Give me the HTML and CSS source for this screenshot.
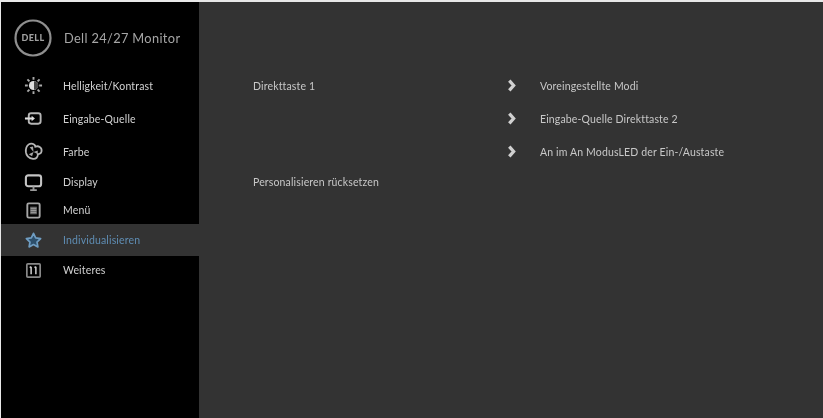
FILE: index.html
```html
<!DOCTYPE html>
<html lang="de">
<head>
<meta charset="utf-8">
<title>Dell 24/27 Monitor</title>
<link rel="stylesheet" href="styles.css">
</head>
<body>
<div class="osd">
  <aside class="sidebar">
    <header class="brand">
      <svg class="logo" viewBox="0 0 38 38"><circle cx="19" cy="19" r="17.500" fill="none" stroke="#8f8f8f" stroke-width="2.200"/></svg>
      <span class="logo-text">DELL</span>
      <span class="brand-name">Dell 24/27 Monitor</span>
    </header>
    <nav class="menu">
      <div class="item tall">
        <svg class="icon" viewBox="0 0 20 20"><circle cx="10" cy="10" r="4.800" fill="#ddd"/><path d="M10.500 5.400a4.600 4.600 0 0 1 0 9.200z" fill="#444"/><path d="M10 1v3M10 16v3M1 10h3M16 10h3M3.600 3.600l2.100 2.100M14.300 14.300l2.100 2.100M3.600 16.400l2.100-2.100M14.300 5.700l2.100-2.100" stroke="#aaa" stroke-width="2" fill="none"/></svg>
        <span>Helligkeit/Kontrast</span>
      </div>
      <div class="item tall">
        <svg class="icon" viewBox="0 0 20 20"><rect x="5" y="4.500" width="12.500" height="11" rx="2.500" fill="none" stroke="#b5b5b5" stroke-width="2"/><path d="M1 10h8" stroke="#ddd" stroke-width="2.200"/><path d="M8 7l3.500 3-3.500 3z" fill="#ddd"/></svg>
        <span>Eingabe-Quelle</span>
      </div>
      <div class="item tall">
        <svg class="icon" viewBox="0 0 20 20"><path d="M5 2.500C7.500 .8 11.500 1.800 12 5c3-1.500 7 .5 6.500 4.500-.4 2.700-2.500 3.500-4 3.200.5 3.300-2 5.300-5 5-4-.4-7-3-7.500-7C1.700 7.500 3 4 5 2.500z" fill="none" stroke="#b5b5b5" stroke-width="1.900"/><path d="M10 10.500L6 5.500l3.500-.8zM10 10.500l4.500-1.500v3.500zM10 10.500l-1.500 4.500-3.500-2z" fill="#a5a5a5"/></svg>
        <span>Farbe</span>
      </div>
      <div class="item mid">
        <svg class="icon" viewBox="0 0 20 20"><rect x="2" y="2.500" width="16" height="11.500" rx="2.500" fill="none" stroke="#c4c4c4" stroke-width="2.200"/><path d="M10 14v3.500M6.500 18h7" stroke="#999" stroke-width="2"/></svg>
        <span>Display</span>
      </div>
      <div class="item mid">
        <svg class="icon" viewBox="0 0 20 20"><rect x="3.500" y="2.500" width="13" height="15" rx="1.500" fill="none" stroke="#a5a5a5" stroke-width="2"/><rect x="6.500" y="6" width="7" height="8" fill="#666"/><path d="M7 8h6M7 10h6M7 12h6" stroke="#aaa" stroke-width=".8"/></svg>
        <span>Menü</span>
      </div>
      <div class="item active">
        <svg class="icon" viewBox="0 0 20 20"><path d="M10 2.500l2.300 4.800 5.200.7-3.800 3.600.9 5.200-4.600-2.500-4.600 2.500.9-5.200L2.500 8l5.200-.7z" fill="#2d4f6b" stroke="#6f9dc2" stroke-width="1.800" stroke-linejoin="round"/></svg>
        <span>Individualisieren</span>
      </div>
      <div class="item mid">
        <svg class="icon" viewBox="0 0 20 20"><rect x="3" y="3" width="14" height="14" rx="1" fill="none" stroke="#888" stroke-width="1.800"/><path d="M7.500 6v8M12.500 6v8M6 7l1.500-1M11 7l1.500-1" stroke="#ccc" stroke-width="1.600" fill="none"/></svg>
        <span>Weiteres</span>
      </div>
    </nav>
  </aside>
  <main class="panel">
    <div class="cell tall">Direkttaste 1</div>
    <div class="arrow tall"><svg viewBox="0 0 9 12"><path d="M2 1.500l4 4.500-4 4.500" fill="none" stroke="#d0d0d0" stroke-width="3"/></svg></div>
    <div class="cell tall">Voreingestellte Modi</div>
    <div class="cell tall"></div>
    <div class="arrow tall"><svg viewBox="0 0 9 12"><path d="M2 1.500l4 4.500-4 4.500" fill="none" stroke="#d0d0d0" stroke-width="3"/></svg></div>
    <div class="cell tall">Eingabe-Quelle Direkttaste 2</div>
    <div class="cell tall"></div>
    <div class="arrow tall"><svg viewBox="0 0 9 12"><path d="M2 1.500l4 4.500-4 4.500" fill="none" stroke="#d0d0d0" stroke-width="3"/></svg></div>
    <div class="cell tall">An im An ModusLED der Ein-/Austaste</div>
    <div class="cell mid reset">Personalisieren rücksetzen</div>
  </main>
</div>
</body>
</html>
```

FILE: styles.css
```css
html, body {
  margin: 0;
  height: 100%;
  background: #e8e8e8;
}
body {
  overflow: hidden;
  font-family: Lato, "Liberation Sans", sans-serif;
}
.osd {
  display: flex;
  height: 416px;
  margin: 2px 0 0 1px;
  background: #333;
}
.sidebar {
  width: 198px;
  flex: none;
  background: #000;
  color: #d2d2d2;
}
.brand {
  height: 67px;
  display: flex;
  align-items: center;
  position: relative;
  box-sizing: border-box;
  padding: 5px 0 0 13px;
}
.logo {
  width: 38px;
  height: 38px;
  flex: none;
  filter: blur(.5px);
}
.logo-text {
  position: absolute;
  left: 13px;
  top: 5px;
  width: 38px;
  line-height: 62px;
  text-align: center;
  font-size: 9px;
  font-weight: 900;
  letter-spacing: .4px;
  color: #a0a0a0;
  filter: blur(.5px);
}
.brand-name {
  margin-left: 12px;
  font-size: 12.800px;
  letter-spacing: .35px;
  color: #a6a6a6;
  filter: blur(.45px);
}
.item {
  display: flex;
  align-items: center;
  padding-left: 23px;
  font-size: 10.500px;
  letter-spacing: .15px;
  gap: 20px;
}
.item span {
  filter: blur(.45px);
}
.tall { height: 33px; }
.mid { height: 28px; }
.icon {
  width: 19px;
  height: 19px;
  flex: none;
  filter: blur(.5px);
}
.active {
  height: 32px;
  background: #333;
  color: #5f8db3;
}
.panel {
  flex: 1;
  display: grid;
  grid-template-columns: 254px 33px 1fr;
  grid-auto-rows: min-content;
  padding: 67px 0 0 54px;
  color: #c8c8c8;
  font-size: 10.500px;
  letter-spacing: .15px;
}
.cell {
  display: flex;
  align-items: center;
  filter: blur(.45px);
}
.arrow {
  display: flex;
  align-items: center;
}
.arrow svg {
  width: 10px;
  height: 13px;
  filter: blur(.5px);
}
.reset {
  grid-column: 1 / -1;
}
```
